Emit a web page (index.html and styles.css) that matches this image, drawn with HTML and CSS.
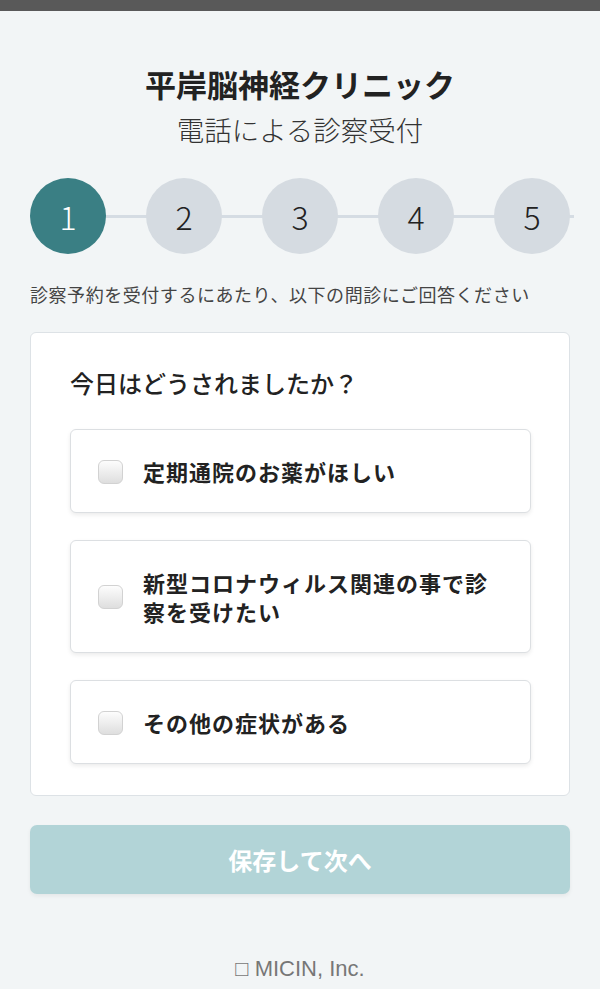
FILE: index.html
```html
<!DOCTYPE html>
<html lang="ja">
<head>
  <meta charset="UTF-8" />
  <meta name="viewport" content="width=device-width, initial-scale=1.0" />
  <title>平岸脳神経クリニック - 電話による診察受付</title>
  <link rel="stylesheet" href="styles.css">
</head>
<body>
  <div class="topbar"></div>

  <main class="page">
    <header class="clinic">
      <h1>平岸脳神経クリニック</h1>
      <p class="sub">電話による診察受付</p>
    </header>

    <ol class="steps">
      <li class="step active">1</li>
      <li class="step">2</li>
      <li class="step">3</li>
      <li class="step">4</li>
      <li class="step">5</li>
    </ol>

    <p class="lead">診察予約を受付するにあたり、以下の問診にご回答ください</p>

    <section class="card">
      <h2>今日はどうされましたか？</h2>

      <label class="option">
        <input type="checkbox" />
        <span>定期通院のお薬がほしい</span>
      </label>
      <label class="option">
        <input type="checkbox" />
        <span>新型コロナウィルス関連の事で診察を受けたい</span>
      </label>
      <label class="option">
        <input type="checkbox" />
        <span>その他の症状がある</span>
      </label>
    </section>

    <button class="next" disabled>保存して次へ</button>
  </main>

  <footer>□ MICIN, Inc.</footer>
</body>
</html>
```

FILE: styles.css
```css
body {
  font-family: "Noto Sans CJK JP", "Noto Sans", sans-serif;
  margin: 0;
  background: #f2f5f6;
  color: #222;
}

.topbar {
  height: 11px;
  background: #595959;
}

.page {
  padding: 0 30px;
}

.clinic {
  text-align: center;
  padding-top: 52px;
}

.clinic h1 {
  margin: 0;
  font-size: 31px;
  line-height: 42px;
  font-weight: bold;
  color: #222;
}

.clinic .sub {
  margin: 4px 0 0;
  font-size: 27.5px;
  line-height: 40px;
  font-weight: 300;
  color: #333;
}

.steps {
  list-style: none;
  margin: 29px 0 0;
  padding: 0;
  display: flex;
  justify-content: space-between;
  position: relative;
}

.steps::before {
  content: "";
  position: absolute;
  left: 0;
  right: -4px;
  top: 37px;
  height: 3px;
  background: #d5dce3;
}

.step {
  position: relative;
  width: 76px;
  height: 76px;
  border-radius: 50%;
  background: #d5dbe1;
  color: #222;
  font-size: 32px;
  font-weight: 300;
  display: flex;
  align-items: center;
  justify-content: center;
}

.step.active {
  background: #3a7f84;
  color: #fff;
}

.lead {
  margin: 26px 0 0;
  font-size: 18px;
  line-height: 28px;
  letter-spacing: 0.55px;
  color: #444;
  white-space: nowrap;
}

.card {
  margin-top: 24px;
  background: #fff;
  border: 1px solid #dde2e6;
  border-radius: 6px;
  padding: 33px 38px 31px 39px;
}

.card h2 {
  margin: 0 0 29px;
  font-size: 24px;
  line-height: 34px;
  font-weight: 500;
  color: #222;
}

.option {
  display: flex;
  align-items: center;
  gap: 20px;
  background: #fff;
  border: 1px solid #dcdfe2;
  border-radius: 6px;
  box-shadow: 0 2px 4px rgba(0,0,0,0.08);
  padding: 27px 27px 26px;
  margin-bottom: 27px;
  font-size: 22px;
  line-height: 29px;
  font-weight: bold;
  letter-spacing: 1px;
  color: #222;
}

.option:last-child {
  margin-bottom: 0;
}

.option input {
  appearance: none;
  flex: none;
  margin: 0;
  width: 25px;
  height: 24px;
  border: 1px solid #d2d2d2;
  border-radius: 6px;
  background: linear-gradient(#fdfdfd, #dedede);
}

.next {
  display: block;
  width: 100%;
  margin-top: 29px;
  height: 69px;
  border: none;
  border-radius: 7px;
  background: #b2d4d7;
  color: #fff;
  font-family: inherit;
  font-size: 24px;
  font-weight: bold;
  box-shadow: 0 2px 4px rgba(0,0,0,0.06);
}

footer {
  margin-top: 62px;
  text-align: center;
  font-family: "Liberation Sans", Arial, sans-serif;
  font-size: 22px;
  color: #777;
}
```
